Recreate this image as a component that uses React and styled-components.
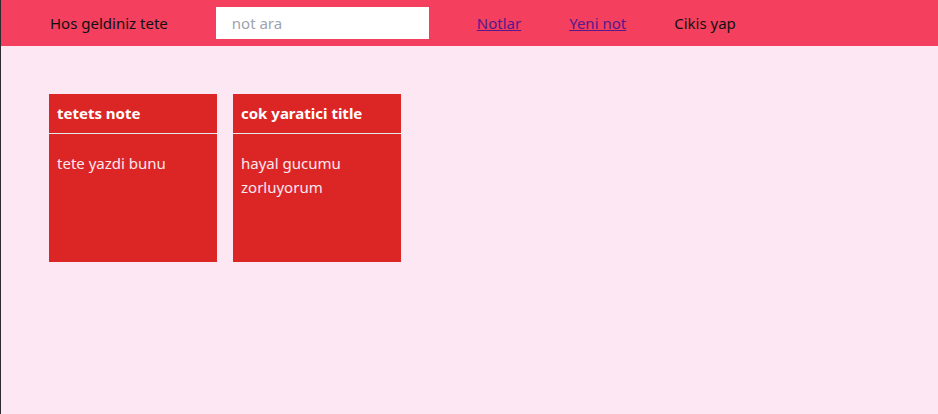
import React from "react";
import styled, { createGlobalStyle } from "styled-components";

const Global = createGlobalStyle`
  html, body { margin: 0; padding: 0; }
  body {
    background: #fce7f3;
    font-family: "Noto Sans", "Open Sans", sans-serif;
    font-size: 15px;
    min-height: 414px;
    border-left: 1px solid #2b2b30;
    box-sizing: border-box;
  }
`;

const Header = styled.header`
  height: 46px;
  background: #f43f5e;
  display: flex;
  align-items: center;
  gap: 48px;
  padding-left: 49px;
  color: #111;
  line-height: 24px;
`;

const Welcome = styled.span`
  color: #111;
`;

const Search = styled.input`
  width: 213px;
  height: 32px;
  box-sizing: border-box;
  border: none;
  outline: none;
  padding: 0 16px;
  font: inherit;
  background: #fff;
  &::placeholder { color: #9ca3af; }
`;

const NavLink = styled.a`
  color: #551a8b;
  text-decoration: underline;
`;

const Plain = styled.span`
  color: #111;
  cursor: pointer;
`;

const Main = styled.main`
  display: flex;
  gap: 16px;
  padding: 48px 0 0 48px;
`;

const Card = styled.div`
  width: 168px;
  height: 168px;
  background: #dc2626;
  color: #fff;
  display: flex;
  flex-direction: column;
`;

const CardTitle = styled.div`
  font-weight: 700;
  padding: 8px 8px;
  line-height: 23px;
  border-bottom: 1px solid #e5e7eb;
`;

const CardBody = styled.div`
  padding: 17px 8px 8px;
  line-height: 24px;
  color: #fde7ee;
`;

const notes = [
  { title: "tetets note", body: "tete yazdi bunu" },
  { title: "cok yaratici title", body: "hayal gucumu zorluyorum" },
];

export default function App() {
  return (
    <>
      <Global />
      <Header>
        <Welcome>Hos geldiniz tete</Welcome>
        <Search placeholder="not ara" />
        <NavLink href="#">Notlar</NavLink>
        <NavLink href="#">Yeni not</NavLink>
        <Plain>Cikis yap</Plain>
      </Header>
      <Main>
        {notes.map((n) => (
          <Card key={n.title}>
            <CardTitle>{n.title}</CardTitle>
            <CardBody>{n.body}</CardBody>
          </Card>
        ))}
      </Main>
    </>
  );
}
